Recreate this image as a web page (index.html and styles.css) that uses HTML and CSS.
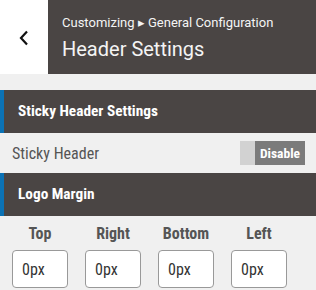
FILE: index.html
```html
<!DOCTYPE html>
<html lang="en">
<head>
  <meta charset="UTF-8">
  <title>Header Settings</title>
  <link rel="stylesheet" href="styles.css">
</head>
<body>
  <div class="topbar">
    <div class="back">
      <svg width="10" height="16" viewBox="0 0 10 16"><path d="M8 1.5 L2 8 L8 14.5" fill="none" stroke="#111" stroke-width="2.2"/></svg>
    </div>
    <div class="title-block">
      <div class="crumbs">Customizing &#9656; General Configuration</div>
      <h1>Header Settings</h1>
    </div>
  </div>

  <div class="section-head">Sticky Header Settings</div>
  <div class="row">
    <span class="row-label">Sticky Header</span>
    <div class="toggle">
      <span class="knob"></span>
      <span class="state">Disable</span>
    </div>
  </div>

  <div class="section-head">Logo Margin</div>
  <div class="margins">
    <div class="field">
      <label for="mTop">Top</label>
      <input type="text" id="mTop" value="0px">
    </div>
    <div class="field">
      <label for="mRight">Right</label>
      <input type="text" id="mRight" value="0px">
    </div>
    <div class="field">
      <label for="mBottom">Bottom</label>
      <input type="text" id="mBottom" value="0px">
    </div>
    <div class="field">
      <label for="mLeft">Left</label>
      <input type="text" id="mLeft" value="0px">
    </div>
  </div>
</body>
</html>
```

FILE: styles.css
```css
body {
  font-family: Roboto, 'Liberation Sans', sans-serif;
  background: #f0f0f0;
  margin: 0;
  overflow: hidden;
}

.topbar {
  display: flex;
  height: 74px;
  margin-bottom: 16px;
}

.back {
  width: 48px;
  background: #fff;
  display: flex;
  align-items: center;
  justify-content: center;
  padding-top: 2px;
}

.title-block {
  flex: 1;
  background: #4a4544;
  color: #f4f4f4;
  padding: 14px 0 0 14px;
}

.crumbs {
  font-size: 13px;
  line-height: 18px;
}

h1 {
  margin: 5px 0 0;
  font-size: 20px;
  font-weight: 400;
  line-height: 24px;
}

/* condensed look for the panel texts */
.section-head,
.row-label,
.state,
.field label,
.field input {
  font-family: 'Roboto Condensed', 'Liberation Sans Narrow', Roboto, sans-serif;
}

.section-head {
  height: 43px;
  line-height: 43px;
  background: #4a4544;
  border-left: 4px solid #0b72b5;
  padding-left: 14px;
  color: #fff;
  font-size: 15.3px;
  font-weight: 700;
}

.row {
  height: 40px;
  display: flex;
  align-items: center;
  justify-content: space-between;
  padding: 0 11px 0 12px;
}

.row-label {
  color: #555;
  font-size: 16px;
}

.toggle {
  display: flex;
  height: 24px;
}

.knob {
  width: 15px;
  background: #d2d2d2;
}

.state {
  width: 50px;
  background: #7b7b7b;
  color: #fff;
  font-size: 13.5px;
  font-weight: 700;
  line-height: 24px;
  text-align: center;
}

.margins {
  display: grid;
  grid-template-columns: repeat(4, 56px);
  column-gap: 17px;
  padding: 9px 12px 0;
}

.field {
  display: flex;
  flex-direction: column;
  align-items: center;
}

.field label {
  color: #555;
  font-size: 16px;
  font-weight: 700;
  line-height: 18px;
  margin-bottom: 7px;
}

.field input {
  width: 56px;
  height: 38px;
  box-sizing: border-box;
  border: 1px solid #999;
  border-radius: 4px;
  background: #fff;
  padding: 0 9px;
  font-size: 16px;
  color: #333;
}
```
